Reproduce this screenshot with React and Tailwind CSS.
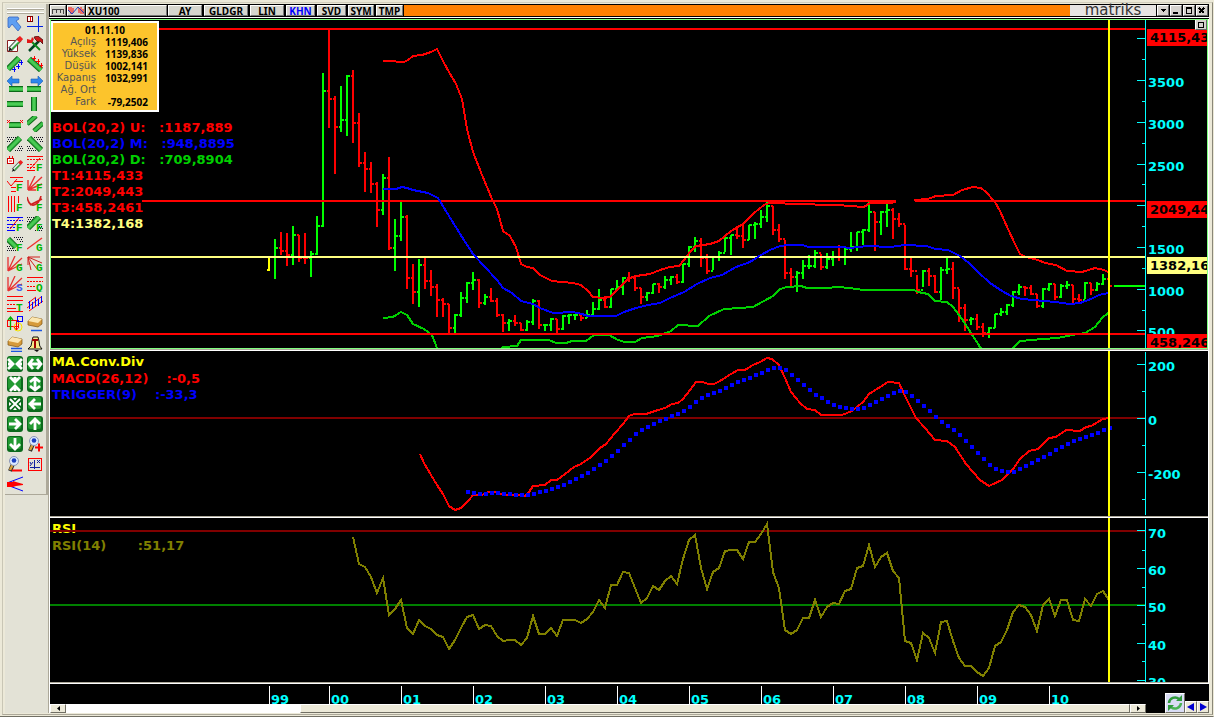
import React from "react";

const RED = "#ff0000";
const GREEN = "#00ff00";
const BLUE = "#0000ff";
const CYAN = "#00ffff";

// one bar per month: high, low, close, up/down (the open is the previous close)
const bars = [
  [257, 271, 257, 2], [239, 279, 248, 1], [232, 255, 251, 0], [233, 266, 255, 0], [226, 265, 235, 1],
  [235, 262, 258, 0], [233, 264, 258, 0], [251, 277, 254, 1], [216, 255, 226, 1], [73, 227, 91, 1],
  [29, 128, 99, 0], [96, 174, 127, 0], [86, 132, 120, 1], [75, 136, 76, 1], [70, 143, 123, 0],
  [113, 167, 163, 0], [152, 192, 169, 0], [162, 193, 184, 0], [182, 227, 210, 0], [174, 215, 178, 1],
  [157, 250, 248, 0], [219, 271, 236, 1], [200, 241, 217, 1], [215, 289, 278, 0], [264, 304, 292, 0],
  [259, 307, 265, 1], [258, 289, 281, 0], [270, 296, 287, 0], [284, 317, 300, 0], [298, 317, 304, 0],
  [304, 333, 328, 0], [314, 333, 315, 1], [292, 317, 298, 1], [282, 303, 283, 1], [272, 290, 280, 1],
  [279, 308, 303, 0], [294, 305, 297, 1], [288, 302, 301, 0], [298, 317, 315, 0], [314, 332, 323, 0],
  [319, 331, 321, 1], [315, 326, 323, 0], [323, 331, 330, 0], [320, 331, 322, 1], [299, 325, 301, 1],
  [300, 329, 325, 0], [324, 331, 325, 1], [318, 331, 319, 1], [319, 334, 329, 0], [315, 330, 316, 1],
  [314, 324, 315, 1], [314, 320, 315, 1], [313, 321, 318, 0], [310, 318, 315, 1], [302, 315, 309, 1],
  [289, 310, 300, 1], [296, 308, 307, 0], [289, 308, 289, 1], [280, 290, 287, 1], [277, 295, 278, 1],
  [272, 282, 278, 0], [276, 291, 288, 0], [288, 304, 297, 0], [292, 301, 293, 1], [284, 294, 284, 1],
  [283, 293, 287, 0], [276, 289, 280, 1], [276, 285, 277, 1], [274, 284, 282, 0], [264, 283, 264, 1],
  [246, 267, 247, 1], [237, 252, 241, 1], [238, 267, 258, 0], [254, 274, 271, 0], [257, 270, 257, 1],
  [251, 261, 253, 1], [237, 252, 238, 1], [235, 255, 235, 1], [226, 239, 236, 0], [224, 248, 240, 0],
  [225, 240, 225, 1], [222, 239, 224, 1], [210, 228, 217, 1], [202, 222, 206, 1], [206, 235, 230, 0],
  [224, 242, 239, 0], [240, 279, 273, 0], [268, 286, 277, 0], [271, 292, 273, 1], [260, 279, 266, 1],
  [255, 269, 266, 1], [250, 268, 253, 1], [254, 270, 267, 0], [253, 269, 259, 1], [251, 266, 257, 1],
  [245, 261, 257, 0], [248, 265, 249, 1], [232, 252, 247, 1], [232, 251, 232, 1], [229, 245, 230, 1],
  [202, 232, 212, 1], [212, 251, 222, 0], [211, 235, 212, 1], [200, 227, 210, 1], [208, 239, 219, 0],
  [213, 227, 224, 0], [225, 270, 269, 0], [258, 277, 271, 0], [275, 294, 290, 0], [270, 287, 271, 1],
  [268, 286, 276, 0], [275, 293, 292, 0], [267, 300, 270, 1], [258, 274, 269, 1], [262, 299, 288, 0],
  [289, 322, 308, 0], [304, 331, 320, 0], [317, 325, 319, 1], [314, 330, 327, 0], [323, 337, 333, 0],
  [327, 338, 328, 1], [314, 328, 314, 1], [308, 316, 312, 1], [304, 315, 305, 1], [291, 307, 292, 1],
  [284, 295, 287, 1], [286, 296, 288, 0], [285, 295, 294, 0], [294, 308, 306, 0], [288, 308, 289, 1],
  [283, 291, 284, 1], [284, 300, 297, 0], [284, 298, 286, 1], [281, 289, 285, 1], [285, 303, 299, 0],
  [294, 304, 300, 0], [282, 299, 283, 1], [283, 295, 290, 0], [282, 291, 284, 1], [274, 285, 279, 1],
  [272, 294, 286, 0],
];
const barColors = [RED, GREEN, "#ffff00"];

const upperBand =
  "383,61 395,61 397,62 404,62 408,60 413,56 422,55 431,52 437,49 443,61 449,72 456,84 462,99 467,129 473,152 482,175 492,199 497,209 503,231 510,236 516,247 521,264 527,267 533,268 540,275 552,281 573,283 581,285 588,291 593,297 603,298 610,297 617,290 629,278 636,276 650,274 660,270 670,267 679,266 684,260 690,252 696,246 710,244 719,241 731,231 743,224 754,213 764,205 769,203 779,203 791,204 838,205 850,206 864,207 870,203 889,203 896,202";
const upperBand2 =
  "914,200 928,199 936,196 953,195 962,190 973,187 981,188 986,192 995,202 1000,211 1008,229 1015,244 1020,254 1026,257 1038,260 1045,263 1056,265 1067,271 1082,272 1095,268 1104,270 1108,272";
const middleBand =
  "383,189 396,189 402,187 407,188 413,190 428,193 438,198 449,216 462,237 473,254 484,266 497,280 503,288 512,293 521,301 533,304 540,308 553,313 573,312 582,314 588,316 616,316 624,312 636,308 648,305 660,303 670,298 684,292 697,284 710,278 722,275 736,267 750,262 761,255 770,250 780,246 788,245 802,245 809,247 842,247 850,248 868,246 890,247 905,245 926,246 936,249 948,250 960,256 969,263 978,272 990,283 1002,291 1011,296 1022,299 1055,302 1070,304 1080,303 1091,299 1099,295 1108,293";
const lowerBand =
  "383,318 393,317 401,312 407,315 413,324 424,329 432,335 437,348 460,370 495,355 503,347 517,346 521,340 549,340 556,343 566,343 572,341 586,341 594,335 609,335 618,340 625,342 635,342 642,338 658,336 671,331 678,325 698,326 709,316 724,309 740,308 753,307 764,301 773,296 780,289 787,287 801,286 807,288 826,288 838,287 850,288 863,290 914,290 918,292 928,294 935,301 947,302 953,307 962,319 971,333 980,347 997,370 1014,347 1020,341 1043,339 1058,338 1072,335 1085,333 1095,327 1102,318 1108,313";

const macd =
  "420,454 424,463 431,475 437,485 443,494 449,506 455,510 461,508 469,500 473,495 482,495 488,492 497,492 503,495 518,495 525,496 529,492 533,486 545,485 551,480 557,480 565,474 574,467 581,464 591,457 600,448 606,444 615,433 623,424 629,416 634,414 646,414 658,410 665,408 672,404 678,403 683,399 690,390 696,382 703,382 708,384 714,384 720,381 731,374 738,370 745,370 753,365 760,362 767,358 772,359 779,365 785,378 791,392 796,398 800,403 807,409 815,410 821,415 842,415 852,411 863,402 869,394 877,389 888,382 899,383 905,396 916,418 925,428 935,440 947,441 955,447 966,464 980,480 989,486 1002,480 1013,469 1020,459 1029,451 1038,449 1049,438 1056,437 1066,430 1080,431 1086,427 1091,426 1103,419 1109,418";
const trigger = [
  492, 493, 494, 494, 493, 493, 494, 494, 495, 495, 495, 494, 492, 491, 489, 487, 485, 482, 479, 476,
  473, 469, 465, 461, 456, 451, 445, 440, 434, 430, 427, 424, 421, 419, 416, 414, 411, 407, 402, 398,
  395, 393, 391, 388, 385, 382, 380, 378, 375, 373, 370, 368, 368, 370, 375, 380, 385, 390, 395, 398,
  402, 405, 407, 408, 409, 409, 408, 405, 402, 399, 396, 393, 391, 392, 396, 401, 406, 411, 417, 422,
  426, 430, 435, 441, 447, 453, 459, 465, 469, 471, 472, 472, 469, 466, 463, 460, 457, 454, 450, 447,
  444, 441, 439, 437, 435, 433, 430, 428,
];

const rsi = [
  537, 564, 567, 577, 593, 578, 615, 609, 600, 628, 634, 620, 626, 629, 635, 637, 649, 640, 628, 617,
  615, 629, 625, 626, 636, 641, 640, 640, 645, 638, 616, 634, 634, 628, 636, 620, 620, 620, 623, 619,
  612, 600, 608, 585, 585, 572, 573, 588, 603, 598, 586, 590, 581, 576, 584, 559, 540, 535, 568, 589,
  572, 568, 551, 550, 550, 559, 542, 542, 534, 524, 572, 588, 630, 634, 630, 618, 618, 600, 617, 607,
  603, 604, 591, 589, 568, 566, 545, 567, 557, 553, 571, 578, 641, 643, 660, 633, 638, 653, 622, 621,
  641, 658, 666, 666, 672, 676, 668, 646, 642, 630, 612, 605, 607, 615, 631, 605, 599, 616, 600, 600,
  620, 621, 599, 606, 594, 591, 600,
];

const years = [
  ["99", 269], ["00", 329], ["01", 401], ["02", 473], ["03", 545], ["04", 617],
  ["05", 689], ["06", 761], ["07", 833], ["08", 905], ["09", 977], ["10", 1049],
];

const tabs = [
  ["AY", "w-[34px]"], ["GLDGR", "w-[44px]"], ["LIN", "w-[34px]"], ["KHN", "w-[29px]"],
  ["SVD", "w-[29px]"], ["SYM", "w-[26px]"], ["TMP", "w-[27px]"],
];

const quote = [
  ["Açılış", "1119,406"],
  ["Yüksek", "1139,836"],
  ["Düşük", "1002,141"],
  ["Kapanış", "1032,991"],
  ["Ağ. Ort", ""],
  ["Fark", "-79,2502"],
];

/* ---------- toolbar icons, all on a 16x16 grid ---------- */

function Bar({ d }) {
  return (
    <g fill="none">
      <path d={d} stroke="#0c6a18" strokeWidth="6" />
      <path d={d} stroke="#36b843" strokeWidth="4" />
      <path d={d} stroke="#4ccc56" strokeWidth="2" />
    </g>
  );
}

function Mark({ children, color = "#00b800" }) {
  return (
    <text x="9" y="15" fontSize="11" fontWeight="bold" fontFamily="Liberation Mono, monospace" fill={color}>
      {children}
    </text>
  );
}

function Stroke({ d, color = RED, w = 1, dash }) {
  return <path d={d} fill="none" stroke={color} strokeWidth={w} strokeDasharray={dash} />;
}

function Pencil() {
  return (
    <g fill="none">
      <path d="M3 13.500L13 3" stroke="#4a5a4a" strokeWidth="5" />
      <path d="M4 12.500L12 4" stroke="#e8f4f0" strokeWidth="3" />
      <path d="M5 13L12 6" stroke="#2fae3a" strokeWidth="1.600" />
      <path d="M11 5L14.500 1.500" stroke="#ee2020" strokeWidth="4.500" />
      <path d="M1 15.500l2-4 2 2.500z" fill="#111" />
    </g>
  );
}

function Nav({ d }) {
  return (
    <g>
      <rect width="16" height="16" rx="3" fill="#0b6a1c" />
      <rect x="1" y="1" width="13" height="12" rx="2" fill="#229a32" />
      <path d={d} fill="none" stroke="#fff" strokeWidth="2.800" />
    </g>
  );
}

function Eraser({ two }) {
  return (
    <g>
      <path d="M1 5l4-4 10 2v5l-4 3-10-2z" fill="#d69a3a" stroke="#7c5413" strokeWidth=".7" />
      <path d="M1 5l4-4 10 2-4 4z" fill="#fbe6b0" />
      <Stroke d={two ? "M4 12.5h11M4 15.5h11" : "M4 14.5h11"} color="#1b55e0" w={1.5} />
    </g>
  );
}

function Lens({ plus }) {
  return (
    <g>
      <path d="M6 8l-3 7" stroke="#222" strokeWidth="4" />
      <path d="M6 8l-3 6" stroke="#d9a23a" strokeWidth="2.500" />
      <circle cx="7" cy="5" r="4.500" fill="#dce9ff" stroke="#8a96b5" />
      <circle cx="7" cy="4.500" r="2.300" fill="#1c3fc0" />
      <Stroke d={plus ? "M8 11.5h8M12 7.5v8" : "M5 14.5h10"} w={2} />
    </g>
  );
}

const rays = "M1 15L15 2M1 15L8 0M1 15L15 8M1 15V1";
const raysDown = "M1 14L15 1M1 14L8 0M1 14L15 8M1 14V4M1 14h8";
const dotsUp = "M0 1.5h9M1 3.5h6M0 5.5h4M15 10.5h-4M16 12.5h-6M15 14.5h-8";
const dotsDown = "M16 1.5H7M15 3.5H9M16 5.5h-4M0 10.5h4M1 12.5h6M0 14.5h9";

const tools = [
  ["Seç", <path d="M1 2l1-1h9l1 2-3 2 5 6-3 4-6-7-3 4-1-1z" fill="#5f9ff2" stroke="#3565c0" strokeWidth=".8" />],
  ["İmleç", <><Stroke d="M11.5 0v16M0 10.5h16" color="#0020e0" /><rect x=".5" y=".5" width="5" height="5" fill="#fff" stroke="#700" /><Stroke d="M3.5 1v4" /></>],
  ["Kalem", <><path d="M.5 4.500h10v11H.5z" fill="#fff" stroke="#8a2020" /><Pencil /></>],
  ["Ayarlar", <><Stroke d="M2 15L12 5" color="#042" w={2.5} /><Stroke d="M4 5l9 9" color="#0a8a1a" w={2} /><path d="M0 3l4 1 1-3 2 2-2 4-5 0z" fill="#e01818" /><path d="M7 1l4-1 5 4v4l-3-3-2 1-3-3z" fill="#c81818" stroke="#300" strokeWidth=".7" /></>],
  ["Yükselen trend", <><Bar d="M1 13L12 2" /><Stroke d="M5 13.500h4M7.500 11v5M9 10.500h4M11.500 8v5M12 6.500h4M14.500 4v5" color={BLUE} /></>],
  ["Düşen trend", <><Bar d="M2 3l12 11" /><Stroke d="M5 2.500h4M7.500 0v5M9 5.500h4M11.500 3v5M12 9.500h4M14.500 7v5" /></>],
  ["Sola uzat", <><Bar d="M2 13h14" /><path d="M0 5l5-5v3h7v4H5v3z" fill="#2e86ee" stroke="#1a5ab0" strokeWidth=".6" /></>],
  ["Sağa uzat", <><Bar d="M0 13h14" /><path d="M16 5l-5-5v3H4v4h7v3z" fill="#2e86ee" stroke="#1a5ab0" strokeWidth=".6" /></>],
  ["Yatay çizgi", <Bar d="M0 8h16" />],
  ["Dikey çizgi", <Bar d="M7 1v14" />],
  ["Sınırlı çizgi", <><Bar d="M2 9h12" /><Stroke d="M0 4l3 3M3 4L0 7M13 4l3 3M16 4l-3 3" /></>],
  ["Paralel", <><Stroke d="M0 8L9 0M7 15L16 7" color="#0c6a18" w={5} /><Stroke d="M0 8L9 0M7 15L16 7" color="#3cc048" w={3} /></>],
  ["Kanal yukarı", <><Stroke d={dotsUp} color="#112" dash="1 1" /><Bar d="M1 14L13 2" /></>],
  ["Kanal aşağı", <><Stroke d={dotsDown} color="#112" dash="1 1" /><Bar d="M2 2l12 12" /></>],
  ["Tarih notu", <><g transform="translate(4 4) scale(.75)"><Pencil /></g><rect x=".5" y="2.500" width="6" height="5" fill="#fff" stroke="#c00" /><Stroke d="M2.500 0v2M5.500 0v2M2 5h3" /></>],
  ["Fibonacci", <><Stroke d="M0 .5h16M0 14.500h8" /><Stroke d="M0 3.500h16M0 8.500h9M0 11.500h8" dash="2 1" /><Stroke d="M3 13L13 2" /><Mark>F</Mark></>],
  ["Fibonacci uzatma", <><Stroke d="M3 1.500h13M7 5.500h9M4 11.500h5M4 15.500h5M0 5l4 5 6-7" /><Mark>F</Mark></>],
  ["Fibonacci fan", <><Stroke d={raysDown} color="#e83030" w={1.4} /><Mark>F</Mark></>],
  ["Fibonacci zaman", <><Stroke d="M1.500 0v16M4.500 0v16M7.500 0v16M11.500 0v7" /><Mark>F</Mark></>],
  ["Fibonacci yay", <><Stroke d="M0 1q2 9 7 8t7-9M3 9L15 3" color="#d02020" w={1.6} /><Mark>F</Mark></>],
  ["Fibonacci kanal", <><Stroke d="M0 1.500h16M0 8.500h9M0 14.500h8" color={BLUE} /><Stroke d="M0 4.500h16M0 11.500h8" color={BLUE} dash="2 1" /><Stroke d="M3 13L12 2" /><Mark>F</Mark></>],
  ["Fibonacci trend", <><Stroke d={dotsUp} color="#112" dash="1 1" /><Bar d="M1 12L12 1" /><Mark>F</Mark></>],
  ["Fibonacci düşüş", <><Stroke d={dotsDown} color="#112" dash="1 1" /><Bar d="M1 3l8 8" /><Mark>F</Mark></>],
  ["Gann çizgisi", <><Stroke d="M0 13L15 2" color="#f03030" w={1.4} /><Mark>G</Mark></>],
  ["Gann fan", <><Stroke d={rays} color="#e83030" w={1.3} /><Mark>G</Mark></>],
  ["Gann fan ters", <><Stroke d="M1 1l14 6M1 1l9 12M1 1l3 13M1 1h12M1 1v8" color="#d02020" /><Mark>G</Mark></>],
  ["Hız çizgileri", <><Stroke d={rays} color="#e83030" w={1.3} /><Mark color="#4060f0">S</Mark></>],
  ["Çeyrek", <><Stroke d="M0 1.500h16M0 14.500h9" /><Stroke d="M0 5.500h16M0 10.500h9" dash="2 1" /><Mark>Q</Mark></>],
  ["Üçlü", <><Stroke d="M0 .5h16M0 4.500h16M0 12.500h9M0 15.500h16" /><Stroke d="M0 8.500h9" dash="2 1" /><Mark>T</Mark></>],
  ["Regresyon", <><Stroke d="M0 12L14 1M2 15L16 5M1 7l8-6" /><Stroke d="M2.500 5v8M5.500 6v7M8.500 2v8M11.500 3v7M14.500 0v7" color={BLUE} /></>],
  ["Şekiller", <><rect x=".5" y="4.500" width="11" height="6" fill="none" stroke={RED} /><rect x="10.500" y=".5" width="5" height="5" fill="none" stroke={BLUE} /><circle cx="11" cy="11" r="4" fill="none" stroke="#f4e400" /><Stroke d="M3.500 14V1M1 4l2.500-3L6 4" color="#00b000" w={1.3} /><Stroke d="M9.500 4v10M7 11l2.500 3 2.500-3" /></>],
  ["Sil", <Eraser />],
  ["Tümünü sil", <Eraser two />],
  ["Alarm", <><path d="M1 13q4-2 4-8l1-4h5l1 4q0 6 3 8z" fill="#f5e98a" stroke="#111" /><path d="M7 14h5l-2 2z" fill="#111" /><Stroke d="M5 4h6M8 4v8" color="#a00000" w={2} /></>],
  ["Yatay daralt", <Nav d="M1 3l5 5-5 5M15 3l-5 5 5 5M1 8h5M15 8h-5" />],
  ["Yatay genişlet", <Nav d="M6 3L2 8l4 5M10 3l4 5-4 5M2 8h12" />],
  ["Dikey daralt", <Nav d="M3 1l5 5 5-5M3 15l5-5 5 5M8 1v5M8 15v-5" />],
  ["Dikey genişlet", <Nav d="M3 6l5-4 5 4M3 10l5 4 5-4M8 2v12" />],
  [
    "Sığdır",
    <g>
      <rect width="16" height="16" rx="3" fill="#0b6a1c" />
      <path d="M3 3l10 10M13 3L3 13" fill="none" stroke="#fff" strokeWidth="2" />
      <path d="M6 2h4L8 4.500zM6 14h4l-2-2.500zM2 6v4L4.500 8zM14 6v4l-2.500-2z" fill="#fff" />
    </g>,
  ],
  ["Sola", <Nav d="M8 3L3 8l5 5M3 8h11" />],
  ["Sağa", <Nav d="M8 3l5 5-5 5M13 8H2" />],
  ["Yukarı", <Nav d="M3 8l5-5 5 5M8 3v11" />],
  ["Aşağı", <Nav d="M3 8l5 5 5-5M8 13V2" />],
  ["Yakınlaştır", <Lens plus />],
  ["Uzaklaştır", <Lens />],
  ["Eksenler", <><rect x="1.500" y="2.500" width="13" height="12" fill="none" stroke={RED} /><Stroke d="M7.500 4v9M3 11.500h10M3 6l1 2M6 6l-3 4M10 4l3 3M13 4l-3 3" color="#1020a0" /></>],
  ["Açı", <><Stroke d="M0 7L16 1M0 9l16 6" color={BLUE} /><path d="M0 6h6V5l3 1 7 2v1l-7 1-3 1H0z" fill={RED} /></>],
];

function Toolbar() {
  return (
    <aside className="flex w-[43px] shrink-0 flex-col bg-[#e3e2d6]">
      <div className="border-r-2 border-b border-[#aca899] pt-1 pb-[2px] pl-[2px]">
        <div className="mr-[2px] h-[2px] border-b border-[#aca899] bg-white" />
        <div className="mt-[2px] mr-[2px] h-[2px] border-b border-[#aca899] bg-white" />
        <div className="mt-[2px] grid grid-cols-[16px_16px] gap-1">
          {tools.map(([name, icon]) => (
            <button key={name} type="button" title={name} aria-label={name} className="h-4 w-4">
              <svg viewBox="0 0 16 16" className="block h-4 w-4">
                {icon}
              </svg>
            </button>
          ))}
        </div>
      </div>
    </aside>
  );
}

function WinButton({ label, children }) {
  return (
    <button
      type="button"
      aria-label={label}
      className="flex h-[11px] w-[12px] items-center justify-center border border-t-white border-l-white border-r-[#666] border-b-[#666] bg-[#d6d3ce]"
    >
      <svg viewBox="0 0 8 7" className="h-[7px] w-2" shapeRendering="crispEdges">
        {children}
      </svg>
    </button>
  );
}

function TitleBar() {
  const cell =
    "flex h-[11px] shrink-0 items-center border border-t-white border-l-white border-r-[#777] border-b-[#777] bg-[#d6d6ce] text-[10px] leading-none font-bold";
  return (
    <header className="flex h-[13px] shrink-0 items-center gap-px border-y border-black bg-black pr-px pl-px font-['Noto_Sans',sans-serif]">
      <button type="button" aria-label="Pencere" className={cell + " w-[16px] justify-center"}>
        <svg viewBox="0 0 14 8" className="h-2 w-[14px]" shapeRendering="crispEdges">
          <path d="M1.500 7V2.500h11V7M5.500 3v3M9.500 3v3" fill="none" stroke="#444" />
        </svg>
      </button>
      <button type="button" aria-label="Grafik tipi" className={cell + " w-[18px] justify-center"}>
        <svg viewBox="0 0 16 9" className="h-[9px] w-4">
          <path d="M1 1v4M3 1v7M5 2v5M11 2v5M13 1v7M15 3v5" stroke={RED} />
          <path d="M0 4l4 4 6-7 6 6" fill="none" stroke="#2040c0" />
        </svg>
      </button>
      <div className={cell + " w-[81px] pl-px"}>XU100</div>
      {tabs.map(([name, width]) => (
        <button
          key={name}
          type="button"
          className={cell + " mr-px justify-center " + width + (name === "KHN" ? " text-[#0000ff]" : "")}
        >
          {name}
        </button>
      ))}
      <div className="-ml-px h-[11px] grow bg-[#ff8000]" />
      <div className="-ml-px flex h-[11px] w-[86px] items-center justify-center bg-[#e6e4e2] font-['DejaVu_Sans',sans-serif] text-[15px] leading-[11px] text-[#333]">
        matriks
      </div>
      <WinButton label="Menü"><path d="M1 2h6L4 5z" /></WinButton>
      <WinButton label="Küçült"><path d="M1 5h5v2H1z" /></WinButton>
      <WinButton label="Büyüt"><path d="M1 0h6v7H1zM2 2v4h4V2z" fillRule="evenodd" /></WinButton>
      <WinButton label="Kapat"><path d="M1 1l5 5M6 1L1 6" stroke="#000" strokeWidth="1.500" /></WinButton>
    </header>
  );
}

function QuoteBox() {
  return (
    <div className="absolute top-px left-0 w-[108px] border-2 border-white bg-[#fcc42c] pt-px pb-[2px]">
      <div className="text-center font-['Noto_Sans',sans-serif] text-[10px] leading-3 font-bold">01.11.10</div>
      <dl className="grid grid-cols-[43px_52px] text-right text-[10px] leading-3">
        {quote.map(([name, value]) => (
          <React.Fragment key={name}>
            <dt className="font-normal whitespace-nowrap text-[#555]">{name}</dt>
            <dd className="font-['Noto_Sans',sans-serif] font-bold">{value}</dd>
          </React.Fragment>
        ))}
      </dl>
    </div>
  );
}

// legend text lies under the drawing so the level lines cut through it
function Legend({ title, rows, className }) {
  return (
    <div className={"absolute left-0 whitespace-pre leading-4 " + className}>
      {title && <h2 className="mb-px text-[#ffff00]">{title}</h2>}
      {rows.map(([text, color]) => (
        <div key={text} style={{ color }}>
          {text}
        </div>
      ))}
    </div>
  );
}

function Scale({ top, bottom, major, minor }) {
  return (
    <g stroke={CYAN} strokeWidth="1">
      <path d={`M1145.500 ${top}V${bottom}`} />
      {major.map((y) => (
        <path key={y} d={`M1137 ${y + 0.5}h8`} />
      ))}
      {minor.map((y) => (
        <path key={y} d={`M1142 ${y + 0.5}h4`} />
      ))}
    </g>
  );
}

function Level({ y, color, from = 50, to = 1145 }) {
  return <path d={`M${from} ${y}H${to}`} stroke={color} strokeWidth="2" />;
}

function Panel({ x, y, height, width, className, axisClass, labels, tags = [], overlay, children }) {
  const pct = (v) => ((v - y) / height) * 100 + "%";
  return (
    <section className={"relative flex min-h-0 basis-0 overflow-hidden bg-black " + className}>
      {overlay}
      <svg
        viewBox={`${x} ${y} ${width} ${height}`}
        preserveAspectRatio="none"
        className="relative h-full min-w-0 grow basis-0"
        shapeRendering="crispEdges"
        fill="none"
      >
        {children}
        <path d={`M1109 ${y - 2}v${height + 4}`} stroke="#ffff00" strokeWidth="2" />
      </svg>
      <svg className={"h-full shrink-0 " + axisClass}>
        {labels.map(([text, at]) => (
          <text key={text} x="2" y={pct(at)} dy="5" fill={CYAN}>
            {text}
          </text>
        ))}
        {tags.map(([text, at, fill]) => (
          <g key={text}>
            <rect x="1" y={pct(at)} width="100%" height="17" fill={fill} />
            <text x="4" y={pct(at)} dy="13" fill="#000">
              {text}
            </text>
          </g>
        ))}
      </svg>
    </section>
  );
}

function PricePanel() {
  return (
    <Panel
      x={51}
      y={20}
      width={1095}
      height={328}
      className="grow-[328] border border-[#80ff80]"
      axisClass="w-[61px]"
      labels={[["3500", 82], ["3000", 124], ["2500", 166], ["1500", 249], ["1000", 291], ["500", 332]]}
      tags={[
        ["4115,433", 29, RED],
        ["2049,443", 201, RED],
        ["1382,168", 257, "#ffff80"],
        ["458,2461", 334, RED],
      ]}
      overlay={
        <>
          <QuoteBox />
          <Legend
            className="top-[100px] pl-px"
            rows={[
              ["BOL(20,2) U:   :1187,889", RED],
              ["BOL(20,2) M:   :948,8895", BLUE],
              ["BOL(20,2) D:   :709,8904", "#00d000"],
              ["T1:4115,433", RED],
              ["T2:2049,443", RED],
              ["T3:458,2461", RED],
              ["T4:1382,168", "#ffff80"],
            ]}
          />
          <button
            type="button"
            aria-label="Panel"
            className="absolute -top-px right-0 z-10 flex h-[11px] w-[12px] items-center justify-center border border-t-white border-l-white border-r-[#666] border-b-[#666] bg-[#d6d3ce]"
          >
            <span className="h-[6px] w-[6px] border border-black" />
          </button>
        </>
      }
    >
      {bars.map(([high, low, close, dir], i) => {
        const x = 269 + i * 6;
        const open = i ? bars[i - 1][2] : 270;
        return (
          <path
            key={i}
            d={`M${x} ${high}V${low}M${x - 2} ${open}h2M${x} ${close}h3`}
            stroke={barColors[dir]}
            strokeWidth="2"
          />
        );
      })}
      <polyline points={upperBand} stroke={RED} strokeWidth="2" />
      <polyline points={upperBand2} stroke={RED} strokeWidth="2" />
      <polyline points={lowerBand} stroke="#00d000" strokeWidth="2" />
      <Level y={29} color={RED} from={159} />
      <Level y={201} color={RED} from={142} to={896} />
      <Level y={201} color={RED} from={915} />
      <Level y={334} color={RED} />
      <Level y={257} color="#ffff80" />
      <polyline points={middleBand} stroke={BLUE} strokeWidth="2" />
      <Level y={286} color={GREEN} from={1114} />
      <Scale
        top={20}
        bottom={348}
        major={[38, 80, 122, 164, 205, 247, 289, 330]}
        minor={[59, 101, 143, 184, 226, 268, 310]}
      />
    </Panel>
  );
}

function MacdPanel() {
  return (
    <Panel
      x={50}
      y={351}
      width={1096}
      height={165}
      className="grow-[165]"
      axisClass="w-[62px]"
      labels={[["200", 366], ["0", 420], ["-200", 474]]}
      overlay={
        <Legend
          className="top-[3px] pl-[2px]"
          title="MA.Conv.Div"
          rows={[
            ["MACD(26,12)    :-0,5", RED],
            ["TRIGGER(9)    :-33,3", BLUE],
          ]}
        />
      }
    >
      <Level y={418} color="#800000" />
      <polyline points={macd} stroke={RED} strokeWidth="2" />
      {trigger.map((y, i) => (
        <rect key={i} x={466 + i * 6} y={y - 2} width="4" height="4" fill={BLUE} />
      ))}
      <Scale top={352} bottom={515} major={[364, 418, 472]} minor={[391, 445, 499]} />
    </Panel>
  );
}

function RsiPanel() {
  return (
    <Panel
      x={50}
      y={518}
      width={1096}
      height={164}
      className="grow-[164]"
      axisClass="w-[62px]"
      labels={[["70", 533], ["60", 570], ["50", 607], ["40", 645], ["30", 682]]}
      overlay={
        <Legend
          className="top-[3px] pl-[2px]"
          title="RSI"
          rows={[["RSI(14)       :51,17", "#808000"]]}
        />
      }
    >
      <Level y={531} color="#800000" />
      <Level y={605} color="#008000" />
      <polyline points={rsi.map((y, i) => `${353 + i * 6},${y}`).join(" ")} stroke="#808000" strokeWidth="2" />
      <Scale top={519} bottom={682} major={[530, 568, 605, 643, 680]} minor={[550, 587, 624, 661]} />
    </Panel>
  );
}

function Divider() {
  return <div className="h-[2px] shrink-0 border-t border-[#aca899] bg-white" />;
}

const raised = "border border-t-white border-l-white border-r-[#716f64] border-b-[#716f64] bg-[#ece9d8]";

function TimeBar() {
  const pct = (x) => ((x - 50) / 1096) * 100 + "%";
  return (
    <footer className="-mr-px flex shrink-0 bg-black">
      <div className="min-w-0 grow">
        <svg className="block h-5 w-full" shapeRendering="crispEdges">
          {years.map(([text, x]) => (
            <g key={text}>
              <line x1={pct(x + 0.5)} x2={pct(x + 0.5)} y1="2" y2="20" stroke="#fff" />
              <text x={pct(x)} dx="2" y="20" fill={CYAN}>
                {text}
              </text>
            </g>
          ))}
        </svg>
        <div role="scrollbar" aria-controls="charts" aria-valuenow={100} className="flex h-[9px] bg-white">
          <button type="button" aria-label="Geri" className={"flex w-4 items-center justify-center " + raised}>
            <svg viewBox="0 0 3 5" className="h-[5px] w-[3px]"><path d="M3 0v5L0 2.500z" /></svg>
          </button>
          <div className="grow-[234] basis-0" />
          <div className={"grow-[830] basis-0 " + raised} />
          <button type="button" aria-label="İleri" className={"flex w-4 items-center justify-center " + raised}>
            <svg viewBox="0 0 3 5" className="h-[5px] w-[3px]"><path d="M0 0v5l3-2.500z" /></svg>
          </button>
        </div>
      </div>
      <div className="flex w-[63px] shrink-0 items-end justify-end">
        <button type="button" aria-label="Yenile" className={"flex h-5 w-5 items-center justify-center " + raised}>
          <svg viewBox="0 0 18 18" className="h-[18px] w-[18px]">
            <rect width="18" height="18" fill="#d9dcf5" />
            <path d="M3 9a6 6 0 0 1 10-4" fill="none" stroke="#2f9a3c" strokeWidth="2.500" />
            <path d="M15 9a6 6 0 0 1-10 4" fill="none" stroke="#49b355" strokeWidth="2.500" />
            <path d="M10 7h6V1zM8 11H2v6z" fill="#2f9a3c" />
          </svg>
        </button>
        <button type="button" aria-label="Önceki" className={"flex h-3 w-3 items-center justify-center " + raised}>
          <svg viewBox="0 0 8 8" className="h-2 w-2"><path d="M7 0v8L0 4z" fill="#0000d0" /></svg>
        </button>
        <button type="button" aria-label="Sonraki" className={"flex h-3 w-3 items-center justify-center " + raised}>
          <svg viewBox="0 0 8 8" className="h-2 w-2"><path d="M1 0v8l7-4z" fill="#0000d0" /></svg>
        </button>
      </div>
    </footer>
  );
}

function App() {
  return (
    <div className="flex h-screen w-full border-r border-b border-r-[#ece9d8] border-b-[#716f64] bg-[#ece9d8] pt-[2px] pb-px pl-[2px] font-['DejaVu_Sans',sans-serif] text-[13px]">
      <div className="flex min-w-0 grow border-t border-r border-b border-l border-t-[#d0cdbc] border-r-[#8a8778] border-b-[#aca899] border-l-[#c9c6b5] pt-px pr-[3px] pb-px pl-[2px]">
        <Toolbar />
        <main className="flex min-w-0 grow flex-col border-l border-[#aca899] bg-white">
          <TitleBar />
          <div className="mt-px h-px shrink-0 bg-black" />
          <div id="charts" className="flex min-h-0 grow flex-col pr-px pl-px font-bold">
            <PricePanel />
            <Divider />
            <MacdPanel />
            <Divider />
            <RsiPanel />
            <Divider />
            <TimeBar />
          </div>
        </main>
      </div>
    </div>
  );
}

export default App;
